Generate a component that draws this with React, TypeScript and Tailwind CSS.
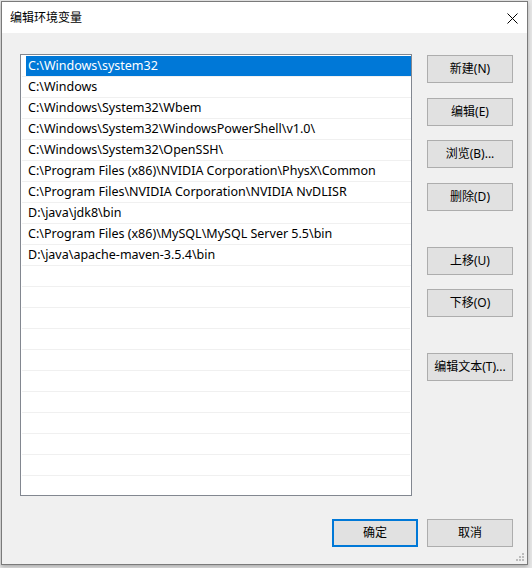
import React from "react";

const paths = [
  "C:\\Windows\\system32",
  "C:\\Windows",
  "C:\\Windows\\System32\\Wbem",
  "C:\\Windows\\System32\\WindowsPowerShell\\v1.0\\",
  "C:\\Windows\\System32\\OpenSSH\\",
  "C:\\Program Files (x86)\\NVIDIA Corporation\\PhysX\\Common",
  "C:\\Program Files\\NVIDIA Corporation\\NVIDIA NvDLISR",
  "D:\\java\\jdk8\\bin",
  "C:\\Program Files (x86)\\MySQL\\MySQL Server 5.5\\bin",
  "D:\\java\\apache-maven-3.5.4\\bin",
];

function Btn({ label, className = "" }: { label: string; className?: string }) {
  return (
    <div
      className={
        "w-[86px] h-[28px] border border-[#adadad] bg-[#e1e1e1] flex items-center justify-center text-[12px] text-black " +
        className
      }
    >
      {label}
    </div>
  );
}

export default function App() {
  const empty = Array.from({ length: 11 });
  return (
    <div
      className="w-[532px] h-[568px] bg-[#e6e6e6] overflow-hidden"
      style={{ fontFamily: '"Noto Sans", "Noto Sans CJK SC", sans-serif' }}
    >
      <div className="relative ml-[1px] mt-[1px] w-[527px] h-[564px] border border-[#7a7a7a] bg-[#f0f0f0] flex flex-col shadow-[0_2px_4px_rgba(0,0,0,0.25)]">
        <div className="h-[31px] bg-white flex items-center justify-between pl-[8px] pr-[9px]">
          <span className="text-[12px] text-black leading-none">编辑环境变量</span>
          <svg width="11" height="11" viewBox="0 0 11 11" className="mt-[1px]">
            <path d="M0.5 0.5 L10.5 10.5 M10.5 0.5 L0.5 10.5" stroke="#000" strokeWidth="1" />
          </svg>
        </div>
        <div className="flex flex-col pl-[18px] pt-[21px] pr-[14px]">
          <div className="flex">
            <div className="w-[392px] h-[442px] border border-[#828790] bg-white pt-[1px] overflow-hidden">
              {paths.map((p, i) => (
                <div key={i} className="ml-[1px] h-[21px] border-b border-[#f0f0f0] flex">
                  {i === 0 ? (
                    <div className="ml-[4px] flex-1 h-[20px] bg-[#0078d7] text-white text-[12.5px] flex items-center pl-[2px] pt-[1px] whitespace-nowrap">
                      {p}
                    </div>
                  ) : (
                    <div className="ml-[4px] flex-1 h-[20px] text-black text-[12.5px] flex items-center pl-[2px] pt-[1px] whitespace-nowrap">
                      {p}
                    </div>
                  )}
                </div>
              ))}
              {empty.map((_, i) => (
                <div key={"e" + i} className="ml-[1px] mr-[1px] h-[21px] border-b border-[#f0f0f0]" />
              ))}
            </div>
            <div className="ml-[15px] mt-[1px] flex flex-col">
              <Btn label="新建(N)" />
              <Btn label="编辑(E)" className="mt-[15px]" />
              <Btn label="浏览(B)..." className="mt-[14px]" />
              <Btn label="删除(D)" className="mt-[15px]" />
              <Btn label="上移(U)" className="mt-[36px]" />
              <Btn label="下移(O)" className="mt-[14px]" />
              <Btn label="编辑文本(T)..." className="mt-[36px]" />
            </div>
          </div>
          <div className="mt-[23px] flex justify-end gap-[9px]">
            <div className="w-[86px] h-[28px] border-2 border-[#0078d7] bg-[#e1e1e1] flex items-center justify-center text-[12px] text-black">
              确定
            </div>
            <Btn label="取消" />
          </div>
        </div>
        <svg width="10" height="10" viewBox="0 0 10 10" className="absolute right-[2px] bottom-[2px]">
          <rect x="7" y="1" width="2" height="2" fill="#bcbcbc" />
          <rect x="4" y="4" width="2" height="2" fill="#bcbcbc" />
          <rect x="7" y="4" width="2" height="2" fill="#bcbcbc" />
          <rect x="1" y="7" width="2" height="2" fill="#bcbcbc" />
          <rect x="4" y="7" width="2" height="2" fill="#bcbcbc" />
          <rect x="7" y="7" width="2" height="2" fill="#bcbcbc" />
        </svg>
      </div>
    </div>
  );
}
